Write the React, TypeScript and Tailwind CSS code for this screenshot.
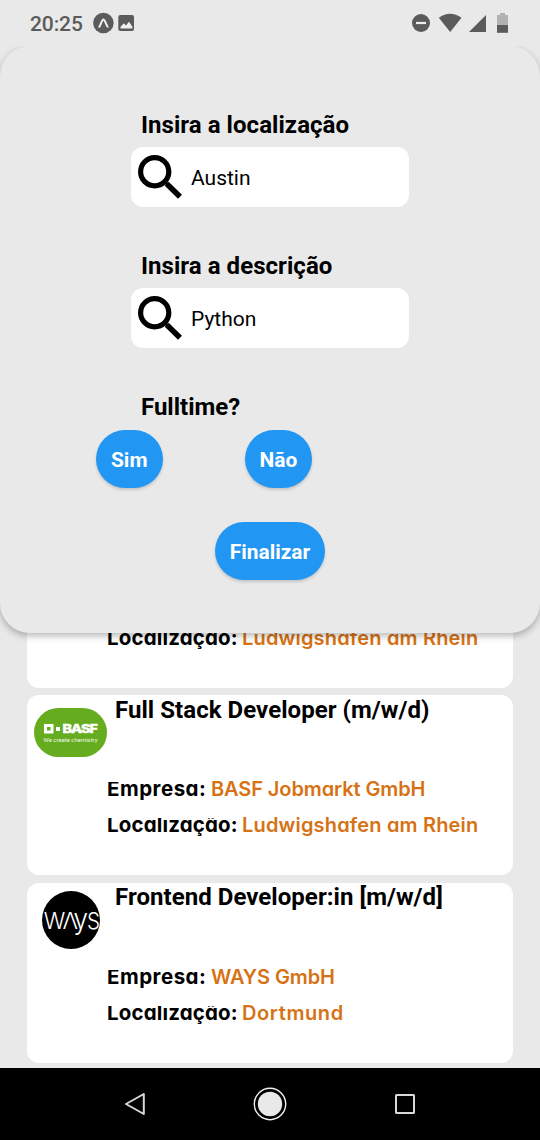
import React from "react";

type Job = {
  title: string;
  company?: string;
  companyClass?: string;
  location: string;
  locationClass: string;
  logo: React.ReactNode;
};

const BasfLogo = () => (
  <svg width="73" height="49" viewBox="0 0 73 49" className="-ml-px shrink-0">
    <rect width="73" height="49" rx="24.5" fill="#65ac1e" />
    <rect x="11.5" y="17.5" width="6.5" height="6.5" fill="none" stroke="#fff" strokeWidth="3" />
    <rect x="22" y="19" width="4" height="4" fill="#fff" />
    <text transform="translate(28.5 25.3) scale(1.2 1)" fill="#fff" stroke="#fff" strokeWidth="0.4" fontFamily="Inter, sans-serif" fontWeight="800" fontSize="12" textLength="29.5">BASF</text>
    <text x="9.5" y="34" textLength="54" lengthAdjust="spacingAndGlyphs" fill="#eef7e6" fontFamily="Roboto, sans-serif" fontSize="6">We create chemistry</text>
  </svg>
);

const WaysLogo = () => (
  <svg width="58" height="58" viewBox="0 0 58 58" className="-mt-px ml-[7px] shrink-0">
    <circle cx="29" cy="29" r="29" fill="#000" />
    <g fill="#fff" fontFamily="Inter, sans-serif" fontWeight="300" fontSize="22.7">
      <text x="1.8" y="37.5" textLength="21.5" lengthAdjust="spacingAndGlyphs">W</text>
      <text x="20.5" y="37.5" textLength="15.5" lengthAdjust="spacingAndGlyphs">Λ</text>
      <text x="31.5" y="37.5" textLength="14.5" lengthAdjust="spacingAndGlyphs" fontSize="29">y</text>
      <text x="45" y="37.5" textLength="13" lengthAdjust="spacingAndGlyphs">S</text>
    </g>
  </svg>
);

const jobs: Job[] = [
  {
    title: "Full Stack Developer (m/w/d)",
    company: "BASF Jobmarkt GmbH",
    companyClass: "tracking-[-0.1px]",
    location: "Ludwigshafen am Rhein",
    locationClass: "tracking-[0.17px]",
    logo: <BasfLogo />,
  },
  {
    title: "Full Stack Developer (m/w/d)",
    company: "BASF Jobmarkt GmbH",
    companyClass: "tracking-[-0.1px]",
    location: "Ludwigshafen am Rhein",
    locationClass: "tracking-[0.17px]",
    logo: <BasfLogo />,
  },
  {
    title: "Frontend Developer:in [m/w/d]",
    company: "WAYS GmbH",
    companyClass: "tracking-[-0.1px]",
    location: "Dortmund",
    locationClass: "tracking-[0.6px]",
    logo: <WaysLogo />,
  },
];

const JobCard = ({ job }: { job: Job }) => (
  <article className="h-[180px] shrink-0 rounded-xl bg-white pl-2">
    <div className="flex h-[86px] items-start">
      <div className="flex w-20 pt-[13px] has-[circle]:pt-[9px]">{job.logo}</div>
      <h2 className="pt-[0.5px] whitespace-nowrap font-['Roboto',sans-serif] text-[24px] leading-[29px] font-bold tracking-[0.05px] text-black">{job.title}</h2>
    </div>
    <div className="flex flex-col gap-[15px] pl-[72px] font-['Inter',sans-serif] font-semibold whitespace-nowrap [font-feature-settings:'cv11']">
      <div className="flex h-[21px] gap-1 overflow-hidden">
        <span className="mt-px h-5 w-[100px] overflow-hidden text-[20.5px] leading-[14px] font-bold tracking-[0.5px] text-black">Empresa:</span>
        <span className={"text-[20px] leading-[16px] text-[#d67214] " + job.companyClass}>{job.company}</span>
      </div>
      <div className="flex h-[21px] gap-1 overflow-hidden">
        <span className="mt-px h-5 w-[131px] overflow-hidden text-[20.5px] leading-[14px] font-bold tracking-[0.15px] text-black">Localização:</span>
        <span className={"text-[20px] leading-[16px] text-[#d67214] " + job.locationClass}>{job.location}</span>
      </div>
    </div>
  </article>
);

const SearchField = ({ label, value }: { label: string; value: string }) => (
  <div className="flex w-[278px] flex-col">
    <label className="h-[37px] pt-px pl-[10px] text-[24px] leading-[29px] font-bold tracking-[0.05px] whitespace-nowrap">{label}</label>
    <div className="flex h-[60px] items-center rounded-xl bg-white pl-[7px]">
      <svg width="44" height="44" viewBox="0 0 44 44" fill="none" stroke="#000">
        <circle cx="16.7" cy="16.7" r="14.1" strokeWidth="5.2" />
        <path d="M28.7 28.7 42 41.7" strokeWidth="5.6" />
        <path d="M26 26 31 31" strokeWidth="3" />
      </svg>
      <span className="pt-0.5 pl-[9px] text-[21px] leading-6">{value}</span>
    </div>
  </div>
);

const Button = ({ children }: { children: React.ReactNode }) => (
  <button className="h-[58px] rounded-full bg-[#2196f3] px-[15px] pt-[3px] text-[20.9px] font-bold whitespace-nowrap text-white shadow-[0_2px_3px_rgba(0,0,0,0.16)]">
    {children}
  </button>
);

const StatusBar = () => (
  <header className="flex h-[46px] items-center justify-between pr-[31px] pl-[30px] text-[#5b5b5b]">
    <div className="flex items-center">
      <span className="w-[63px] pt-[3px] text-[21px] font-medium tracking-[-0.1px]">20:25</span>
      <svg width="42" height="22" viewBox="0 0 42 22">
        <circle cx="10.4" cy="11" r="10.3" fill="#5b5b5b" />
        <path d="M6.3 14.8C8 12.5 9 7.4 10.4 7.4S13 12.5 14.6 14.8" fill="none" stroke="#f0f0f0" strokeWidth="2" strokeLinecap="round" />
        <rect x="25.3" y="3" width="15.7" height="16" rx="2" fill="#5b5b5b" />
        <path d="M27.5 16.5v-1.8l3.5-3.4 2 2.2 3-3.7 3.4 5v1.7z" fill="#f0f0f0" />
      </svg>
    </div>
    <svg width="97" height="22" viewBox="0 0 97 22" fill="#5b5b5b">
      <circle cx="9" cy="11" r="9" />
      <path d="M4 11h10" stroke="#eee" strokeWidth="2.2" />
      <path d="M26.8 5.8Q38.2-2.5 49.5 5.8L38.2 20Z" />
      <path d="M57 20 74 3v17z" />
      <path d="M88 1h5v2h3v10H85V3h3z" fill="#b2b2b2" />
      <path d="M85 13h11v7.8H85z" />
    </svg>
  </header>
);

const FilterPanel = () => (
  <div className="absolute inset-x-0 top-0 overflow-hidden pb-4">
  <section className="flex h-[587px] w-full flex-col items-center rounded-[30px] bg-[#e9e9e9] pt-16 shadow-[0_3px_7px_rgba(0,0,0,0.28)]">
    <div className="flex flex-col gap-11">
      <SearchField label="Insira a localização" value="Austin" />
      <SearchField label="Insira a descrição" value="Python" />
      <p className="h-[38px] pt-px pl-[10px] text-[24px] leading-[29px] font-bold">Fulltime?</p>
    </div>
    <div className="flex w-full gap-[82px] pl-24">
      <Button>Sim</Button>
      <Button>Não</Button>
    </div>
    <div className="pt-[34px]">
      <Button>Finalizar</Button>
    </div>
  </section>
  </div>
);

const NavigationBar = () => (
  <nav className="flex h-[72px] items-center justify-between bg-black px-[123px]">
    <svg width="24" height="26" viewBox="0 0 24 26" fill="none" stroke="#d8d8d8" strokeWidth="2">
      <path d="M20.8 3v20L3 13z" strokeLinejoin="round" />
    </svg>
    <svg width="34" height="34" viewBox="0 0 34 34">
      <circle cx="17" cy="17" r="15.7" fill="none" stroke="#f2f2f2" strokeWidth="1.4" />
      <circle cx="17" cy="17" r="12.2" fill="#e9e9e9" />
    </svg>
    <svg width="24" height="24" viewBox="0 0 24 24" fill="none" stroke="#d8d8d8" strokeWidth="2">
      <rect x="3" y="3" width="18" height="18" rx="0.5" />
    </svg>
  </nav>
);

export default function App() {
  return (
    <div className="flex h-[1140px] w-[540px] flex-col overflow-hidden bg-[#e9e9e9] font-['Roboto',sans-serif] text-black">
      <StatusBar />
      <main className="relative min-h-0 flex-1">
        <div className="flex h-full flex-col justify-end gap-[7.5px] overflow-hidden px-[27px] pb-[5.5px]">
          {jobs.map((job, i) => (
            <JobCard key={i} job={job} />
          ))}
        </div>
        <FilterPanel />
      </main>
      <NavigationBar />
    </div>
  );
}
